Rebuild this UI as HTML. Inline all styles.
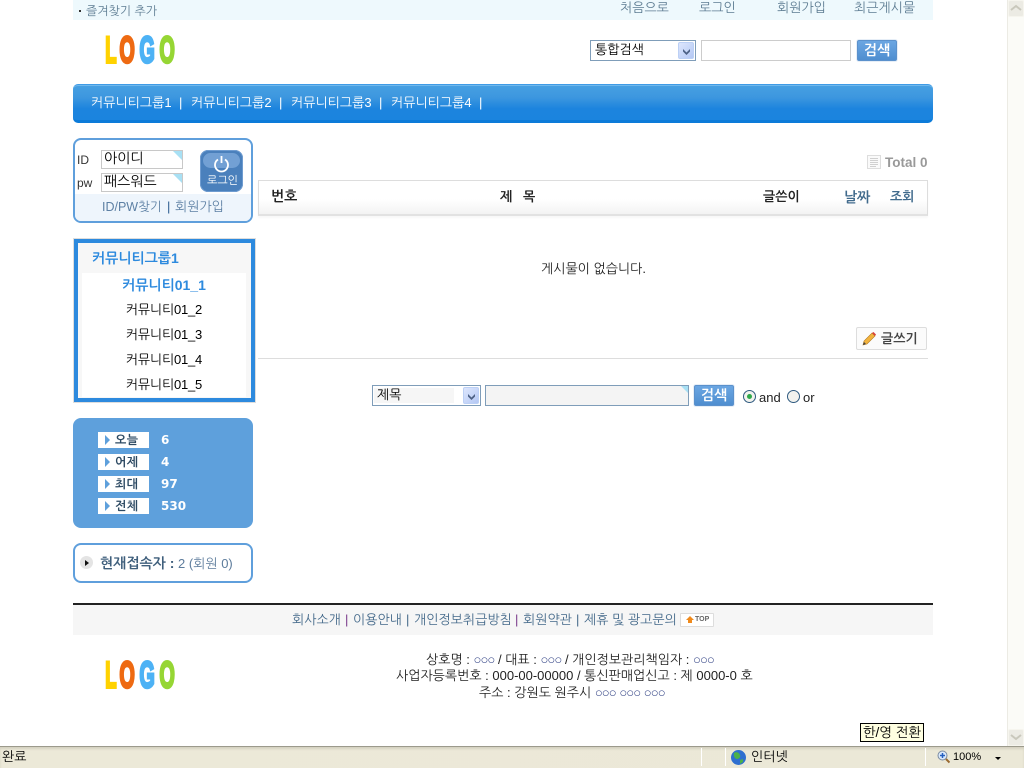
<!DOCTYPE html>
<html lang="ko"><head><meta charset="utf-8"><title>커뮤니티</title>
<style>
*{box-sizing:border-box}
html,body{margin:0;padding:0;width:1024px;height:768px;overflow:hidden;background:#fff}
body{position:relative;font-family:"Liberation Sans","NanumGothic","Noto Sans CJK KR",sans-serif;font-size:13px;color:#000}
.b{position:absolute}
.t{position:absolute;white-space:nowrap;line-height:16px;transform:translateY(-8px)}
.nav{color:#5d7c92}
.w{color:#fff}
.bold{font-weight:bold}
.sel{position:absolute;background:#fff;border:1px solid #7f9db9}
.arr{position:absolute;right:1px;top:1px;bottom:1px;width:16px;background:linear-gradient(135deg,#dde6fd,#b4c8f4);border:1px solid #bcd0f5;border-radius:2px}
.arr svg{position:absolute;left:2px;top:4px}
.btn{position:absolute;background:linear-gradient(#6ba6e2,#4f8ed0);border:1px solid #5b91cc;border-radius:2px;color:#fff;font-weight:bold;text-align:center;font-size:14px;line-height:19px;box-shadow:0 0 0 1px #e6eef7}
.corner{position:absolute;right:0;top:0;width:0;height:0;border-top:9px solid #a8e0f4;border-left:9px solid transparent}
.inp{position:absolute;background:#fff;border:1px solid #c8c8c8;font-size:14px;line-height:15px;padding-left:2px}
.lab{position:absolute;left:98px;width:51px;height:16px;background:#fff;font-weight:bold;color:#2d4a63;line-height:16px;padding-left:17px;letter-spacing:.5px;font-size:12px}
.lab i{position:absolute;left:7px;top:3px;width:0;height:0;border-left:5px solid #5ea0dc;border-top:5px solid transparent;border-bottom:5px solid transparent}
.num{position:absolute;left:161px;color:#fff;font-weight:bold;font-size:12px;font-family:"DejaVu Sans","NanumGothic",sans-serif;line-height:16px}
.li{position:absolute;left:82px;width:164px;text-align:center;line-height:16px;font-size:13px;letter-spacing:-.2px;white-space:nowrap}
.logo{position:absolute;overflow:visible}
.c{letter-spacing:-.9px;color:#3a4a8a}
</style></head><body>

<!-- top bar -->
<div class="b" style="left:73px;top:0;width:860px;height:20px;background:#eef9fd"></div>
<div class="b" style="left:79px;top:10px;width:2px;height:2px;background:#333"></div>
<span class="t nav" style="left:86px;top:11px;font-size:12px">즐겨찾기 추가</span>
<span class="t nav" style="left:620px;top:8px">처음으로</span>
<span class="t nav" style="left:699px;top:8px">로그인</span>
<span class="t nav" style="left:777px;top:8px">회원가입</span>
<span class="t nav" style="left:854px;top:8px">최근게시물</span>

<!-- logo -->
<svg class="logo" style="left:100px;top:30px" width="84" height="40" font-family="Liberation Sans" font-weight="bold" font-size="37" stroke-width="3">
<text transform="translate(5.300,32.500) scale(.5,1)" fill="#ffd200" stroke="#ffd200">L</text>
<text transform="translate(19.500,32.500) scale(.53,1)" fill="#ee6a12" stroke="#ee6a12">O</text>
<text transform="translate(39.500,32.500) scale(.53,1)" fill="#4db2f5" stroke="#4db2f5">G</text>
<text transform="translate(59.500,32.500) scale(.53,1)" fill="#96d634" stroke="#96d634">O</text>
</svg>

<!-- header search -->
<div class="sel" style="left:590px;top:40px;width:106px;height:21px"><span class="t" style="left:4px;top:9px">통합검색</span>
<div class="arr"><svg width="11" height="10"><path d="M2 2l3.500 3.500L9 2v2.500L5.500 8 2 4.500z" fill="#4d6185"/></svg></div></div>
<div class="b" style="left:701px;top:40px;width:150px;height:21px;border:1px solid #ccc"></div>
<div class="btn" style="left:857px;top:40px;width:40px;height:21px">검색</div>

<!-- blue nav -->
<div class="b" style="left:73px;top:84px;width:860px;height:39px;border-radius:5px;border-top:1px solid #3f9be6;border-bottom:3px solid #0c7bd9;background:linear-gradient(#47a0e2 0,#3d97df 35%,#1c84de 68%,#1b84de 100%);box-shadow:inset 0 1px 0 #70b8ec"></div>
<span class="t w" style="left:91px;top:103px">커뮤니티그룹1</span>
<span class="t w" style="left:179px;top:103px">|</span>
<span class="t w" style="left:191px;top:103px">커뮤니티그룹2</span>
<span class="t w" style="left:279px;top:103px">|</span>
<span class="t w" style="left:291px;top:103px">커뮤니티그룹3</span>
<span class="t w" style="left:379px;top:103px">|</span>
<span class="t w" style="left:391px;top:103px">커뮤니티그룹4</span>
<span class="t w" style="left:479px;top:103px">|</span>

<!-- login box -->
<div class="b" style="left:73px;top:138px;width:180px;height:85px;border:2px solid #5f9fdc;border-radius:8px;overflow:hidden;background:#fff">
  <div class="b" style="left:0;right:0;top:54px;bottom:0;background:#eef5fc"></div>
</div>
<span class="t" style="left:77px;top:160px;color:#333;font-size:12px">ID</span>
<span class="t" style="left:77px;top:183px;color:#333;font-size:12px">pw</span>
<div class="inp" style="left:101px;top:150px;width:82px;height:19px">아이디<div class="corner"></div></div>
<div class="inp" style="left:101px;top:173px;width:82px;height:19px">패스워드<div class="corner"></div></div>
<div class="b" style="left:200px;top:150px;width:43px;height:42px;background:#4a80bc;border-radius:8px;box-shadow:inset 0 0 0 1px #6f9cd0"></div>
<div class="b" style="left:203px;top:153px;width:37px;height:15px;background:#72a0d4;border-radius:8px"></div>
<svg class="b" style="left:212px;top:155px" width="19" height="19"><path d="M6 4.500A6.500 6.500 0 1 0 13 4.500" fill="none" stroke="#fff" stroke-width="1.800"/><path d="M9.500 1v7" stroke="#fff" stroke-width="1.800"/></svg>
<span class="t w" style="left:207px;top:181px;font-size:11px">로그인</span>
<span class="t" style="left:102px;top:207px;color:#5d80a4;font-size:12.500px">ID/PW찾기</span>
<span class="t" style="left:167px;top:207px;color:#2d5f92">|</span>
<span class="t" style="left:175px;top:207px;color:#5d80a4">회원가입</span>

<!-- group box -->
<div class="b" style="left:73px;top:238px;width:183px;height:165px;border:1px solid #ddd"></div>
<div class="b" style="left:74px;top:239px;width:181px;height:163px;border:4px solid #2d8ade;background:#f7f7f7"></div>
<div class="b" style="left:82px;top:273px;width:164px;height:124px;background:#fff"></div>
<span class="t bold" style="left:92px;top:258px;color:#2d8ade;font-size:14px">커뮤니티그룹1</span>
<div class="li bold" style="top:277px;color:#2d8ade;font-size:14px;letter-spacing:0">커뮤니티01_1</div>
<div class="li" style="top:302px">커뮤니티01_2</div>
<div class="li" style="top:327px">커뮤니티01_3</div>
<div class="li" style="top:352px">커뮤니티01_4</div>
<div class="li" style="top:377px">커뮤니티01_5</div>

<!-- stats -->
<div class="b" style="left:73px;top:418px;width:180px;height:110px;background:#5ea0dc;border-radius:8px"></div>
<div class="lab" style="top:432px"><i></i>오늘</div><div class="num" style="top:432px">6</div>
<div class="lab" style="top:454px"><i></i>어제</div><div class="num" style="top:454px">4</div>
<div class="lab" style="top:476px"><i></i>최대</div><div class="num" style="top:476px">97</div>
<div class="lab" style="top:498px"><i></i>전체</div><div class="num" style="top:498px">530</div>

<!-- current -->
<div class="b" style="left:73px;top:543px;width:180px;height:40px;border:2px solid #5f9fdc;border-radius:8px"></div>
<div class="b" style="left:80px;top:556px;width:13px;height:13px;background:#e4e4e4;border-radius:50%"></div>
<div class="b" style="left:85px;top:560px;width:0;height:0;border-left:4px solid #111;border-top:3px solid transparent;border-bottom:3px solid transparent"></div>
<span class="t" style="left:100px;top:563px;color:#5d7c9c"><b style="color:#3f5f7c;font-size:14px">현재접속자 :</b> 2 (회원 0)</span>

<!-- main list -->
<svg class="b" style="left:867px;top:155px" width="15" height="15"><rect x=".5" y=".5" width="13" height="13" fill="#fafafa" stroke="#ddd"/><path d="M3 3.500h8M3 5.500h8M3 7.500h8M3 9.500h8M3 11.500h6" stroke="#d0d0d0"/></svg>
<span class="t bold" style="left:885px;top:163px;color:#999;font-size:13.500px">Total 0</span>
<div class="b" style="left:258px;top:180px;width:670px;height:36px;border:1px solid #ddd;border-bottom:2px solid #e2e2e2;background:linear-gradient(#fff 55%,#f3f3f3);box-shadow:0 2px 2px #f8f8f8"></div>
<span class="t bold" style="left:271px;top:196px;color:#222;font-size:14px">번호</span>
<span class="t bold" style="left:500px;top:197px;color:#222;font-size:13px">제&nbsp;&nbsp;&nbsp;목</span>
<span class="t bold" style="left:763px;top:197px;color:#222;font-size:13px">글쓴이</span>
<span class="t bold" style="left:844px;top:197px;color:#406a8c;font-size:14px">날짜</span>
<span class="t bold" style="left:890px;top:197px;color:#406a8c;font-size:13px">조회</span>
<span class="t" style="left:541px;top:269px;color:#222">게시물이 없습니다.</span>

<!-- write -->
<div class="b" style="left:856px;top:327px;width:71px;height:23px;border:1px solid #ddd;border-radius:2px;background:#fbfbfb"></div>
<svg class="b" style="left:861px;top:331px" width="16" height="16"><path d="M2 14l1-4L11 2l3 3-8 8z" fill="#f2b33d" stroke="#b37a22" stroke-width=".6"/><path d="M11 2l3 3 1-1.500L12.500 1z" fill="#d8413a"/><path d="M2 14l1-3 2 2z" fill="#444"/></svg>
<span class="t bold" style="left:881px;top:339px;color:#444;font-size:13px">글쓰기</span>
<div class="b" style="left:258px;top:358px;width:670px;height:1px;background:#ddd"></div>

<!-- list search -->
<div class="sel" style="left:372px;top:385px;width:109px;height:21px;background:#fff"><div class="b" style="left:1px;top:2px;width:80px;height:15px;background:#f6f6f6"></div><span class="t" style="left:4px;top:9px">제목</span>
<div class="arr"><svg width="11" height="10"><path d="M2 2l3.500 3.500L9 2v2.500L5.500 8 2 4.500z" fill="#4d6185"/></svg></div></div>
<div class="b" style="left:485px;top:385px;width:204px;height:21px;background:#f4f4f4;border:1px solid #7f9db9"><div class="corner" style="border-top-width:7px;border-left-width:7px"></div></div>
<div class="btn" style="left:694px;top:385px;width:40px;height:21px">검색</div>
<div class="b" style="left:743px;top:390px;width:13px;height:13px;border-radius:50%;border:1px solid #2f5a80;background:#f2f2ee"></div>
<div class="b" style="left:747px;top:394px;width:5px;height:5px;border-radius:50%;background:#2fa84a"></div>
<span class="t" style="left:759px;top:398px;color:#222">and</span>
<div class="b" style="left:787px;top:390px;width:13px;height:13px;border-radius:50%;border:1px solid #2f5a80;background:#f2f2ee"></div>
<span class="t" style="left:803px;top:398px;color:#222">or</span>

<!-- footer -->
<div class="b" style="left:73px;top:603px;width:860px;height:2px;background:#222"></div>
<div class="b" style="left:73px;top:605px;width:860px;height:30px;background:#f6f6f6"></div>
<span class="t" style="left:292px;top:620px;color:#44698a">회사소개</span>
<span class="t" style="left:345px;top:620px;color:#7a3a8a">|</span>
<span class="t" style="left:353px;top:620px;color:#44698a">이용안내</span>
<span class="t" style="left:406px;top:620px;color:#44698a">|</span>
<span class="t" style="left:414px;top:620px;color:#44698a">개인정보취급방침</span>
<span class="t" style="left:515px;top:620px;color:#7a3a8a">|</span>
<span class="t" style="left:523px;top:620px;color:#44698a">회원약관</span>
<span class="t" style="left:576px;top:620px;color:#44698a">|</span>
<span class="t" style="left:584px;top:620px;color:#44698a">제휴 및 광고문의</span>
<div class="b" style="left:680px;top:613px;width:34px;height:14px;border:1px solid #ddd;background:#fff;border-radius:1px"></div>
<div class="b" style="left:686px;top:616px;width:0;height:0;border-left:4px solid transparent;border-right:4px solid transparent;border-bottom:4px solid #f08a1c"></div>
<div class="b" style="left:688px;top:620px;width:4px;height:3px;background:#f08a1c"></div>
<span class="t bold" style="left:695px;top:620px;font-size:7px;color:#666">TOP</span>

<svg class="logo" style="left:100px;top:655px" width="84" height="40" font-family="Liberation Sans" font-weight="bold" font-size="37" stroke-width="3">
<text transform="translate(5.300,32.500) scale(.5,1)" fill="#ffd200" stroke="#ffd200">L</text>
<text transform="translate(19.500,32.500) scale(.53,1)" fill="#ee6a12" stroke="#ee6a12">O</text>
<text transform="translate(39.500,32.500) scale(.53,1)" fill="#4db2f5" stroke="#4db2f5">G</text>
<text transform="translate(59.500,32.500) scale(.53,1)" fill="#96d634" stroke="#96d634">O</text>
</svg>

<span class="t" style="left:426px;top:660px;color:#222">상호명 : <span class="c">○○○</span> / 대표 : <span class="c">○○○</span> / 개인정보관리책임자 : <span class="c">○○○</span></span>
<span class="t" style="left:396px;top:676px;color:#222">사업자등록번호 : 000-00-00000 / 통신판매업신고 : 제 0000-0 호</span>
<span class="t" style="left:479px;top:693px;color:#222">주소 : 강원도 원주시 <span class="c">○○○</span> <span class="c">○○○</span> <span class="c">○○○</span></span>

<!-- scrollbar -->
<div class="b" style="left:1007px;top:0;width:17px;height:746px;background:#fbfbf7;border-left:1px solid #ecebe4"></div>
<div class="b" style="left:1008px;top:0;width:16px;height:17px;background:#ecebe4;border:1px solid #f6f5ee;border-radius:2px"></div>
<svg class="b" style="left:1010px;top:4px" width="12" height="9"><path d="M1 6l5-4 5 4" fill="none" stroke="#c9c8bc" stroke-width="2"/></svg>
<div class="b" style="left:1008px;top:729px;width:16px;height:17px;background:#ecebe4;border:1px solid #f6f5ee;border-radius:2px"></div>
<svg class="b" style="left:1010px;top:733px" width="12" height="9"><path d="M1 2l5 4 5-4" fill="none" stroke="#c9c8bc" stroke-width="2"/></svg>

<!-- tooltip -->
<div class="b" style="left:860px;top:723px;width:64px;height:19px;background:#ffffe1;border:1px solid #000;line-height:17px;text-align:center;white-space:nowrap;font-size:13.500px">한/영 전환</div>

<!-- status bar -->
<div class="b" style="left:0;top:746px;width:1024px;height:22px;background:linear-gradient(90deg,#ece9d8,#ebe8d7);border-top:1px solid #9c9a8c;box-shadow:inset 0 2px 2px #d4d1c0"></div>
<span class="t" style="left:2px;top:757px">완료</span>
<div class="b" style="left:701px;top:748px;width:1px;height:18px;background:#fff"></div>
<div class="b" style="left:725px;top:748px;width:1px;height:18px;background:#fff"></div>
<svg class="b" style="left:731px;top:750px" width="15" height="15"><circle cx="7.500" cy="7.500" r="7.500" fill="#2f6fd0"/><path d="M3 3c3-2 5 0 6 2s-1 4-3 4S2 6 3 3zM9 10l3-1 0 3-3 2z" fill="#4cb04a"/></svg>
<span class="t" style="left:751px;top:757px">인터넷</span>
<div class="b" style="left:925px;top:748px;width:1px;height:18px;background:#fff"></div>
<svg class="b" style="left:937px;top:750px" width="13" height="14"><circle cx="5.500" cy="5.500" r="4.500" fill="#dbe9fb" stroke="#7a8aa0"/><path d="M3 5.500h5M5.500 3v5" stroke="#2560c0" stroke-width="1.500"/><path d="M9 9l3.500 3.500" stroke="#9a6a30" stroke-width="2"/></svg>
<span class="t" style="left:953px;top:757px;font-size:11px">100%</span>
<div class="b" style="left:995px;top:757px;width:0;height:0;border-left:3px solid transparent;border-right:3px solid transparent;border-top:3px solid #000"></div>

</body></html>
